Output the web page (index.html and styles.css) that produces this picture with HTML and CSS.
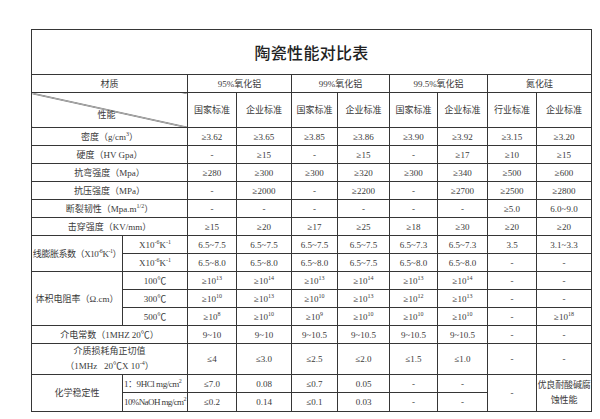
FILE: index.html
```html
<!DOCTYPE html>
<html lang="zh">
<head>
<meta charset="utf-8">
<title>陶瓷性能对比表</title>
<link rel="stylesheet" href="styles.css">
</head>
<body>
<table class="sheet">
  <colgroup>
    <col class="c1"><col class="c2"><col class="c3"><col class="c4"><col class="c5">
    <col class="c6"><col class="c7"><col class="c8"><col class="c9"><col class="c10">
  </colgroup>
  <tr class="r-title"><td colspan="10" class="title">陶瓷性能对比表</td></tr>
  <tr class="r18"><td colspan="2">材质</td><td colspan="2">95%氧化铝</td><td colspan="2">99%氧化铝</td><td colspan="2">99.5%氧化铝</td><td colspan="2">氮化硅</td></tr>
  <tr class="r-head"><td colspan="2" class="diag"><span class="diag-label">性能</span></td><td>国家标准</td><td>企业标准</td><td>国家标准</td><td>企业标准</td><td>国家标准</td><td>企业标准</td><td>行业标准</td><td>企业标准</td></tr>
  <tr class="r18"><td colspan="2">密度（g/cm<sup>3</sup>）</td><td>≥3.62</td><td>≥3.65</td><td>≥3.85</td><td>≥3.86</td><td>≥3.90</td><td>≥3.92</td><td>≥3.15</td><td>≥3.20</td></tr>
  <tr class="r18"><td colspan="2">硬度（HV Gpa）</td><td>-</td><td>≥15</td><td>-</td><td>≥15</td><td>-</td><td>≥17</td><td>≥10</td><td>≥15</td></tr>
  <tr class="r18"><td colspan="2">抗弯强度（Mpa）</td><td>≥280</td><td>≥300</td><td>≥300</td><td>≥320</td><td>≥300</td><td>≥340</td><td>≥500</td><td>≥600</td></tr>
  <tr class="r18"><td colspan="2">抗压强度（MPa）</td><td>-</td><td>≥2000</td><td>-</td><td>≥2200</td><td>-</td><td>≥2700</td><td>≥2500</td><td>≥2800</td></tr>
  <tr class="r18"><td colspan="2">断裂韧性（Mpa.m<sup>1/2</sup>）</td><td>-</td><td>-</td><td>-</td><td>-</td><td>-</td><td>-</td><td>≥5.0</td><td>6.0~9.0</td></tr>
  <tr class="r18"><td colspan="2">击穿强度（KV/mm）</td><td>≥15</td><td>≥20</td><td>≥17</td><td>≥25</td><td>≥18</td><td>≥30</td><td>≥20</td><td>≥20</td></tr>
  <tr class="r18"><td rowspan="2" class="tight">线膨胀系数（X10<sup>-6</sup>K<sup>-1</sup>）</td><td>X10<sup>-6</sup>K<sup>-1</sup></td><td>6.5~7.5</td><td>6.5~7.5</td><td>6.5~7.5</td><td>6.5~7.5</td><td>6.5~7.3</td><td>6.5~7.3</td><td>3.5</td><td>3.1~3.3</td></tr>
  <tr class="r18"><td>X10<sup>-6</sup>K<sup>-1</sup></td><td>6.5~8.0</td><td>6.5~8.0</td><td>6.5~8.0</td><td>6.5~7.5</td><td>6.5~8.0</td><td>6.5~8.0</td><td>-</td><td>-</td></tr>
  <tr class="r18"><td rowspan="3">体积电阻率（Ω.cm）</td><td>100℃</td><td>≥10<sup>13</sup></td><td>≥10<sup>14</sup></td><td>≥10<sup>13</sup></td><td>≥10<sup>14</sup></td><td>≥10<sup>13</sup></td><td>≥10<sup>14</sup></td><td>-</td><td>-</td></tr>
  <tr class="r18"><td>300℃</td><td>≥10<sup>10</sup></td><td>≥10<sup>13</sup></td><td>≥10<sup>10</sup></td><td>≥10<sup>13</sup></td><td>≥10<sup>12</sup></td><td>≥10<sup>13</sup></td><td>-</td><td>-</td></tr>
  <tr class="r18"><td>500℃</td><td>≥10<sup>8</sup></td><td>≥10<sup>10</sup></td><td>≥10<sup>9</sup></td><td>≥10<sup>10</sup></td><td>≥10<sup>10</sup></td><td>≥10<sup>10</sup></td><td>-</td><td>≥10<sup>18</sup></td></tr>
  <tr class="r18"><td colspan="2">介电常数（1MHZ 20℃）</td><td>9~10</td><td>9~10</td><td>9~10.5</td><td>9~10.5</td><td>9~10.5</td><td>9~10.5</td><td>-</td><td>-</td></tr>
  <tr class="r28"><td colspan="2" class="two-line"><div>介质损耗角正切值</div><div>（1MHz&nbsp;&nbsp;&nbsp;20℃X 10<sup>-4</sup>）</div></td><td>≤4</td><td>≤3.0</td><td>≤2.5</td><td>≤2.0</td><td>≤1.5</td><td>≤1.0</td><td>-</td><td>-</td></tr>
  <tr class="r18"><td rowspan="2">化学稳定性</td><td class="tight sub-left">1：9HCl mg/cm<sup>2</sup></td><td>≤7.0</td><td>0.08</td><td>≤0.7</td><td>0.05</td><td>-</td><td>-</td><td rowspan="2">-</td><td rowspan="2" class="wrap">优良耐酸碱腐蚀性能</td></tr>
  <tr class="r19"><td class="tighter sub-left">10%NaOH mg/cm<sup>2</sup></td><td>≤0.2</td><td>0.14</td><td>≤0.1</td><td>0.03</td><td>-</td><td>-</td></tr>
</table>
</body>
</html>
```
FILE: styles.css
```css
html, body {
  margin: 0;
  padding: 0;
  background: #ffffff;
}

body {
  padding: 29px 0 0 31px;
}

.sheet {
  border-collapse: collapse;
  table-layout: fixed;
  width: 561px;
  font-family: "Liberation Serif", "Noto Sans CJK SC", serif;
  font-size: 9px;
  color: #3a3a3a;
  border: 1px solid #2e2e2e;
}

.c1 { width: 91px; }
.c2 { width: 65px; }
.c3 { width: 49px; }
.c4 { width: 55px; }
.c5 { width: 46px; }
.c6 { width: 52px; }
.c7 { width: 48px; }
.c8 { width: 50px; }
.c9 { width: 49px; }
.c10 { width: 55px; }

.sheet td {
  border: 1px solid #363636;
  padding: 0;
  text-align: center;
  vertical-align: middle;
  line-height: 12px;
  white-space: nowrap;
  overflow: visible;
}

.sheet sup {
  font-size: 6px;
  line-height: 0;
  vertical-align: 4px;
}

.r-title { height: 45px; }
.r18 { height: 18px; }
.r19 { height: 19px; }
.r28 { height: 28px; }
.r-head { height: 35px; }

.sheet td.title {
  font-family: "Noto Sans CJK SC", sans-serif;
  font-size: 16px;
  font-weight: 500;
  color: #222;
  letter-spacing: 0.3px;
}

.sheet td.diag {
  background: linear-gradient(to top right, transparent calc(50% - 0.8px), #1e1e1e 50%, transparent calc(50% + 0.8px));
  padding-top: 10px;
  padding-right: 6px;
}

.sheet td.tight {
  letter-spacing: -0.45px;
}

.sheet td.tighter {
  letter-spacing: -0.6px;
}

.sheet td.sub-left {
  text-align: left;
  padding-left: 1px;
}

.sheet td.two-line {
  line-height: 15px;
}

.sheet td.wrap {
  white-space: normal;
  padding: 0;
  letter-spacing: -0.15px;
  line-height: 15px;
}
```
